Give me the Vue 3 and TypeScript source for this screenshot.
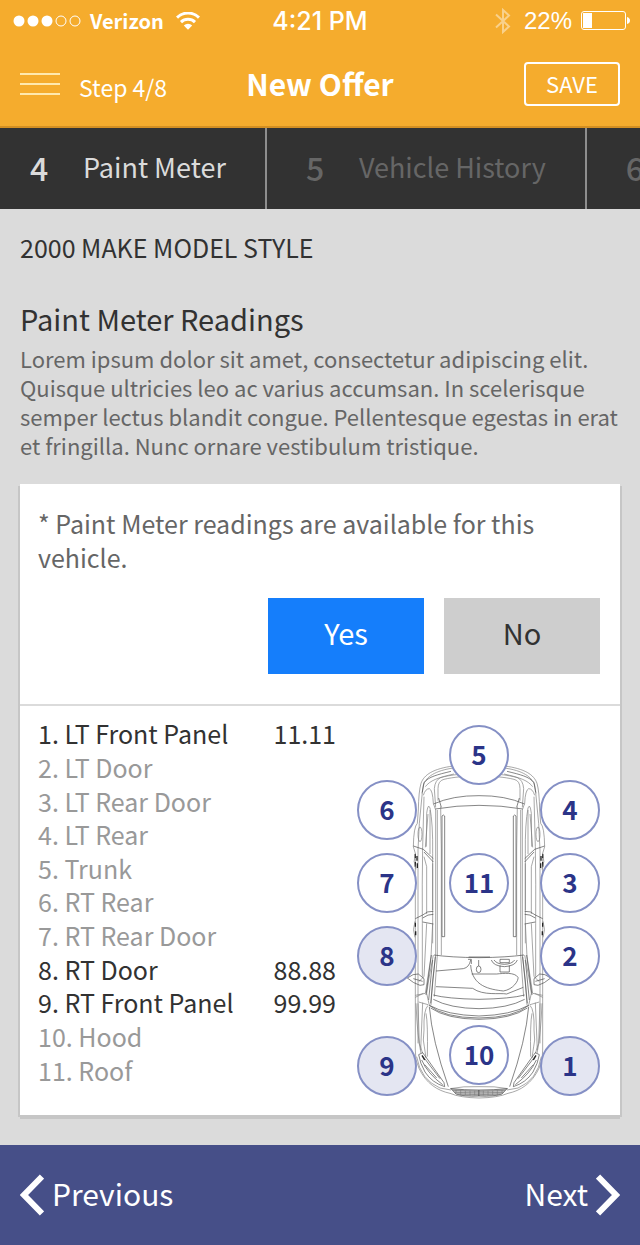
<script setup lang="ts">
import { computed, ref } from 'vue'

interface Reading {
  id: number
  label: string
  value: string
}

interface Pin {
  id: number
  x: number
  y: number
}

const steps = [
  { number: 4, label: 'Paint Meter' },
  { number: 5, label: 'Vehicle History' },
  { number: 6, label: '' },
]
const currentStep = 4

const available = ref(true)

const readings: Reading[] = [
  { id: 1, label: 'LT Front Panel', value: '11.11' },
  { id: 2, label: 'LT Door', value: '' },
  { id: 3, label: 'LT Rear Door', value: '' },
  { id: 4, label: 'LT Rear', value: '' },
  { id: 5, label: 'Trunk', value: '' },
  { id: 6, label: 'RT Rear', value: '' },
  { id: 7, label: 'RT Rear Door', value: '' },
  { id: 8, label: 'RT Door', value: '88.88' },
  { id: 9, label: 'RT Front Panel', value: '99.99' },
  { id: 10, label: 'Hood', value: '' },
  { id: 11, label: 'Roof', value: '' },
]

const pins: Pin[] = [
  { id: 5, x: 122, y: 30 },
  { id: 6, x: 30, y: 85 },
  { id: 4, x: 213, y: 85 },
  { id: 7, x: 30, y: 158 },
  { id: 11, x: 122, y: 158 },
  { id: 3, x: 213, y: 158 },
  { id: 8, x: 30, y: 231 },
  { id: 2, x: 213, y: 231 },
  { id: 10, x: 122, y: 330 },
  { id: 9, x: 30, y: 341 },
  { id: 1, x: 213, y: 341 },
]

const measured = computed(() => new Set(readings.filter((r) => r.value).map((r) => r.id)))
</script>

<template>
  <div class="screen">
    <header class="header">
      <div class="status">
        <div class="status-side">
          <svg class="signal" width="70" height="14" viewBox="0 0 70 14" aria-hidden="true">
            <circle cx="6" cy="7" r="5.5" fill="#fff" />
            <circle cx="20" cy="7" r="5.5" fill="#fff" />
            <circle cx="34" cy="7" r="5.5" fill="#fff" />
            <circle cx="48" cy="7" r="5" fill="none" stroke="#fff" />
            <circle cx="62" cy="7" r="5" fill="none" stroke="#fff" />
          </svg>
          <span class="carrier">Verizon</span>
          <svg width="24" height="18" viewBox="0 0 24 18" aria-hidden="true">
            <path d="M1 5.6a15.6 15.6 0 0 1 22 0" fill="none" stroke="#fff" stroke-width="3" />
            <path d="M5 10.1a10 10 0 0 1 14 0" fill="none" stroke="#fff" stroke-width="3" />
            <path d="M7.8 13.4a6 6 0 0 1 8.4 0L12 17.8z" fill="#fff" />
          </svg>
        </div>
        <span class="clock">4:21 PM</span>
        <div class="status-side status-right">
          <svg class="bluetooth" width="16" height="26" viewBox="0 0 16 26" aria-hidden="true">
            <path d="M1 6.5l13 12-6 5.500V2l6 5.500-13 12" fill="none" stroke="#fff" stroke-width="2" opacity="0.45" />
          </svg>
          <span class="percent">22%</span>
          <svg width="49" height="20" viewBox="0 0 49 20" aria-hidden="true">
            <rect x="0.5" y="0.500" width="44" height="18" rx="2.500" fill="none" stroke="#fff" />
            <rect x="2" y="2" width="9" height="15" fill="#fff" />
            <path d="M46 6q3 1 3 3.500T46 13z" fill="#fff" />
          </svg>
        </div>
      </div>
      <div class="bar">
        <div class="bar-side">
          <button class="menu" type="button" aria-label="Menu">
            <svg width="40" height="22" viewBox="0 0 40 22" aria-hidden="true">
              <path d="M0 1h40M0 11h40M0 21h40" stroke="#ffe9ae" stroke-width="2" />
            </svg>
          </button>
          <span class="progress">Step 4/8</span>
        </div>
        <h1 class="title">New Offer</h1>
        <div class="bar-side bar-right">
          <button class="save" type="button">SAVE</button>
        </div>
      </div>
    </header>

    <nav class="steps" aria-label="Steps">
      <a
        v-for="step in steps"
        :key="step.number"
        href="#"
        class="step"
        :class="{ current: step.number === currentStep }"
      >
        <span class="step-number">{{ step.number }}</span>
        <span v-if="step.label" class="step-label">{{ step.label }}</span>
      </a>
    </nav>

    <main class="content">
      <p class="vehicle">2000 MAKE MODEL STYLE</p>
      <h2 class="heading">Paint Meter Readings</h2>
      <p class="intro">
        Lorem ipsum dolor sit amet, consectetur adipiscing elit. Quisque ultricies leo ac varius
        accumsan. In scelerisque semper lectus blandit congue. Pellentesque egestas in erat et
        fringilla. Nunc ornare vestibulum tristique.
      </p>

      <section class="card">
        <div class="question">
          <p id="availability" class="question-text">
            * Paint Meter readings are available for this vehicle.
          </p>
          <div class="answers" role="group" aria-labelledby="availability">
            <button
              type="button"
              class="answer"
              :class="{ chosen: available }"
              :aria-pressed="available"
              @click="available = true"
            >
              Yes
            </button>
            <button
              type="button"
              class="answer"
              :class="{ chosen: !available }"
              :aria-pressed="!available"
              @click="available = false"
            >
              No
            </button>
          </div>
        </div>

        <div class="results">
          <table class="readings">
            <tbody>
              <tr v-for="r in readings" :key="r.id" :class="{ filled: r.value }">
                <th scope="row">{{ r.id }}. {{ r.label }}</th>
                <td>{{ r.value }}</td>
              </tr>
            </tbody>
          </table>

          <div class="diagram">
            <svg class="car" viewBox="21 45 729 1125" aria-hidden="true">
              <defs>
                <g id="car-side">
                  <path d="M387 160Q350 160 310 168C250 176 222 194 213 220Q206 244 205 300L202 340Q191 350 190 410L196 430V1020Q194 1050 207 1075C228 1120 262 1142 300 1150Q330 1163 387 1164" />
                  <path d="M310 174C256 182 228 200 220 226L216 250" />
                  <path class="ink" d="M303 184C262 194 236 200 222 218L217 247" />
                  <path d="M312 192C262 203 240 212 226 230" />
                  <path d="M387 190C350 190 300 194 272 203Q255 210 253 236L257 292" />
                  <path d="M387 198C350 198 310 201 282 208Q264 212 264 236V272" />
                  <path class="ink" d="M250 282Q310 256 387 257M256 297Q320 286 387 286M266 264L274 292" />
                  <path d="M220 256Q226 236 238 236Q248 240 250 280L257 300V735" />
                  <path d="M262 300V735M272 290L274 420V735" />
                  <path class="ink" d="M276 318Q280 312 284 318V680H276Z" />
                  <path d="M217 247L208 340L204 420V1000" />
                  <path d="M222 260L218 410Q216 520 217 640V800" />
                  <path d="M229 410L230 310Q234 278 240 294Q249 340 248 430V600M234 312L226 412M240 300V432" />
                  <ellipse cx="210" cy="373" rx="6" ry="22" />
                  <path class="ink" d="M190 408L220 418L250 446M222 426L250 456" />
                  <path class="dark" d="M196 432V444M201 438V452M196 456V470M202 460V474" />
                  <path d="M222 440L230 470V612M248 460V700M196 430Q188 455 198 478" />
                  <path class="ink" d="M196 626L218 615Q232 602 250 604M218 624Q234 612 250 613M218 636L250 642" />
                  <path class="dark" d="M196 638V650M197 664V676" />
                  <path d="M195 634Q186 660 195 682M248 640L243 740L226 850M257 735L248 810L243 885M250 735L236 810L230 850L238 886M262 735L253 860" />
                  <path class="ink" d="M244 735L228 855M256 740L242 880M248 750L236 870" />
                  <path d="M230 640L222 800L206 815M196 856L226 850M196 862L220 850M206 876L234 884M218 878L212 1020" />
                  <path class="ink" d="M172 804Q190 790 205 792L222 806V824L210 826Q190 820 172 804ZM190 806L218 814" />
                  <path d="M234 886Q220 900 222 960L220 990Q226 1030 228 1044M228 910Q234 940 232 1040M204 880L208 1000L218 1030M198 880Q202 980 213 1030" />
                  <path class="ink" d="M238 890Q246 990 295 1130M250 855Q290 866 387 868M250 868Q300 895 387 896M238 886Q290 915 387 918" />
                  <path class="ink" d="M238 886Q280 923 387 924M242 894Q290 927 387 928" />
                  <path class="ink" d="M206 1034L218 1028L234 1050L282 1118L284 1130Q246 1118 225 1086Q210 1060 206 1034ZM218 1038L270 1106M215 1050Q232 1090 278 1124M224 1064L260 1104" />
                  <path class="dark" d="M216 1036L224 1050" />
                  <path d="M200 1040Q212 1110 270 1134L303 1140M300 1136Q340 1128 387 1130" />
                  <path class="grille" d="M303 1136Q340 1140 387 1140V1158Q340 1160 318 1152Z" />
                  <path d="M308 1141L387 1144M314 1147L387 1149M322 1152L387 1154M318 1140V1148M332 1140V1156M346 1142V1156M360 1142V1156M374 1142V1156" />
                </g>
              </defs>
              <use href="#car-side" />
              <use href="#car-side" transform="translate(774 0) scale(-1 1)" />
              <path class="ink" d="M252 735Q300 742 387 743Q470 742 522 735M356 741H420" />
              <path class="ink" d="M258 783L340 776Q358 772 362 750M354 748H364V762M362 765C366 830 420 838 460 843C490 838 506 812 504 802C494 786 460 790 440 792H365" />
              <path class="ink" d="M258 830L368 835C400 858 450 848 470 852L520 832" />
              <path class="ink" d="M386 750V768M379 778Q379 768 386 768Q393 768 393 778Q393 788 386 788Q379 788 379 778ZM424 750Q430 768 463 770Q496 768 502 750M432 750Q440 762 463 763Q486 762 494 750M450 748H478V758H450ZM450 766V786H478V766" />
            </svg>
            <button
              v-for="pin in pins"
              :key="pin.id"
              type="button"
              class="pin"
              :class="{ marked: measured.has(pin.id) }"
              :style="{ left: pin.x + 'px', top: pin.y + 'px' }"
            >
              {{ pin.id }}
            </button>
          </div>
        </div>
      </section>
    </main>

    <footer class="footer">
      <button class="pager" type="button">
        <svg width="24" height="42" viewBox="0 0 24 42" aria-hidden="true">
          <path d="M22 2.500L4 21l18 18.500" fill="none" stroke="#fff" stroke-width="6" />
        </svg>
        <span class="pager-label">Previous</span>
      </button>
      <button class="pager" type="button">
        <span class="pager-label">Next</span>
        <svg width="24" height="42" viewBox="0 0 24 42" aria-hidden="true">
          <path d="M2 2.500L20 21 2 39.500" fill="none" stroke="#fff" stroke-width="6" />
        </svg>
      </button>
    </footer>
  </div>
</template>

<style>
body {
  margin: 0;
  background: #dbdbdb;
}
</style>

<style scoped>
.screen {
  display: flex;
  flex-direction: column;
  min-height: 100vh;
  background: #dbdbdb;
  color: #323232;
  font-family: 'Noto Sans CJK SC', 'Noto Sans', sans-serif;
  font-size: 25px;
}

button {
  padding: 0;
  border: 0;
  background: none;
  color: inherit;
  font: inherit;
  cursor: pointer;
}

svg {
  display: block;
  flex: none;
}

h1,
h2,
p {
  margin: 0;
  font-weight: 400;
}

.header {
  background: #f5ac2d;
  border-bottom: 2px solid #d38f22;
  color: #fff;
}

.status {
  display: flex;
  align-items: center;
  height: 42px;
  padding: 0 10px;
}

.status-side {
  display: flex;
  flex: 1;
  align-items: center;
}

.status-right {
  justify-content: flex-end;
}

.signal {
  margin: 0 7px 0 3px;
}

.carrier {
  margin-right: 12px;
  font-size: 20px;
  font-weight: 700;
  line-height: 40px;
}

.clock {
  font-family: Inter, 'Liberation Sans', sans-serif;
  font-size: 25px;
  font-weight: 500;
}

.bluetooth {
  margin-right: 13px;
}

.percent {
  margin-right: 9px;
  font-family: 'Liberation Sans', sans-serif;
  font-size: 24px;
}

.bar {
  display: flex;
  align-items: center;
  height: 84px;
  padding: 0 20px;
}

.bar-side {
  display: flex;
  flex: 1;
  align-items: center;
}

.bar-right {
  justify-content: flex-end;
}

.menu {
  margin-right: 19px;
}

.progress {
  padding-top: 5px;
  font-size: 23px;
  line-height: 36px;
}

.title {
  padding-bottom: 2px;
  font-size: 30px;
  font-weight: 700;
  line-height: 36px;
}

.save {
  box-sizing: border-box;
  width: 96px;
  height: 44px;
  padding-bottom: 2px;
  border: 2px solid #fff;
  border-radius: 4px;
  font-size: 22px;
  line-height: 36px;
}

.steps {
  display: flex;
  height: 81px;
  overflow: hidden;
  background: #323232;
}

.step {
  display: flex;
  flex: none;
  align-items: center;
  padding: 0 39px 4px;
  border-right: 2px solid #8e8e8e;
  color: #666;
  font-size: 27px;
  line-height: 36px;
  text-decoration: none;
}

.step:first-child {
  padding-left: 30px;
}

.step-number {
  width: 53px;
  font-size: 32px;
  font-weight: 500;
}

.current {
  color: #dbdbdb;
}

.content {
  flex: 1;
  padding: 20px 20px 30px;
}

.vehicle {
  margin-bottom: 35px;
  line-height: 36px;
}

.heading {
  margin-bottom: 8px;
  font-size: 29px;
  line-height: 36px;
}

.intro {
  margin-bottom: 24px;
  color: #666;
  font-size: 22px;
  line-height: 29px;
}

.card {
  background: #fff;
  box-shadow: -2px 2px 0 #c6c6c6, 2px 2px 0 #c6c6c6, 0 4px 0 #c6c6c6;
}

.question {
  padding: 22px 20px 30px 18px;
  border-bottom: 2px solid #dbdbdb;
  color: #666;
}

.question-text {
  margin-bottom: 24px;
  line-height: 34px;
}

.answers {
  display: flex;
  justify-content: flex-end;
  gap: 20px;
}

.answer {
  width: 156px;
  height: 76px;
  padding-bottom: 8px;
  background: #cecece;
  color: #323232;
  font-size: 29px;
  line-height: 36px;
}

.answer.chosen {
  background: #157efb;
  color: #fff;
}

.results {
  display: flex;
  gap: 21px;
  align-items: flex-start;
  padding: 11px 20px 15px 18px;
}

.readings {
  flex: 1;
  height: 370px;
  border-collapse: collapse;
  color: #999;
  line-height: 33px;
}

.readings th,
.readings td {
  padding: 0;
  font-weight: 400;
  text-align: left;
  white-space: nowrap;
}

.readings td {
  text-align: right;
}

.readings .filled {
  color: #323232;
}

.diagram {
  position: relative;
  flex: none;
  width: 243px;
  margin-top: 8px;
}

.car {
  width: 100%;
  fill: none;
  stroke: #7c7c7c;
  stroke-width: 2;
}

.car .ink {
  stroke: #484848;
}

.car .dark {
  stroke: #222;
  stroke-width: 4;
}

.car .grille {
  fill: #c4c4c4;
  stroke: #444;
}

.pin {
  position: absolute;
  box-sizing: border-box;
  width: 60px;
  height: 60px;
  margin: -30px 0 0 -30px;
  padding-bottom: 2px;
  border: 2px solid #8590c5;
  border-radius: 50%;
  background: #fff;
  color: #2b3488;
  font-size: 26px;
  font-weight: 700;
  line-height: 36px;
}

.pin.marked {
  background: #e4e6f2;
}

.footer {
  display: flex;
  align-items: center;
  justify-content: space-between;
  height: 100px;
  padding: 0 20px;
  background: #464f88;
  color: #fff;
}

.pager {
  display: flex;
  gap: 8px;
  align-items: center;
  font-size: 30px;
  line-height: 38px;
}

.pager-label {
  padding-bottom: 4px;
}
</style>
